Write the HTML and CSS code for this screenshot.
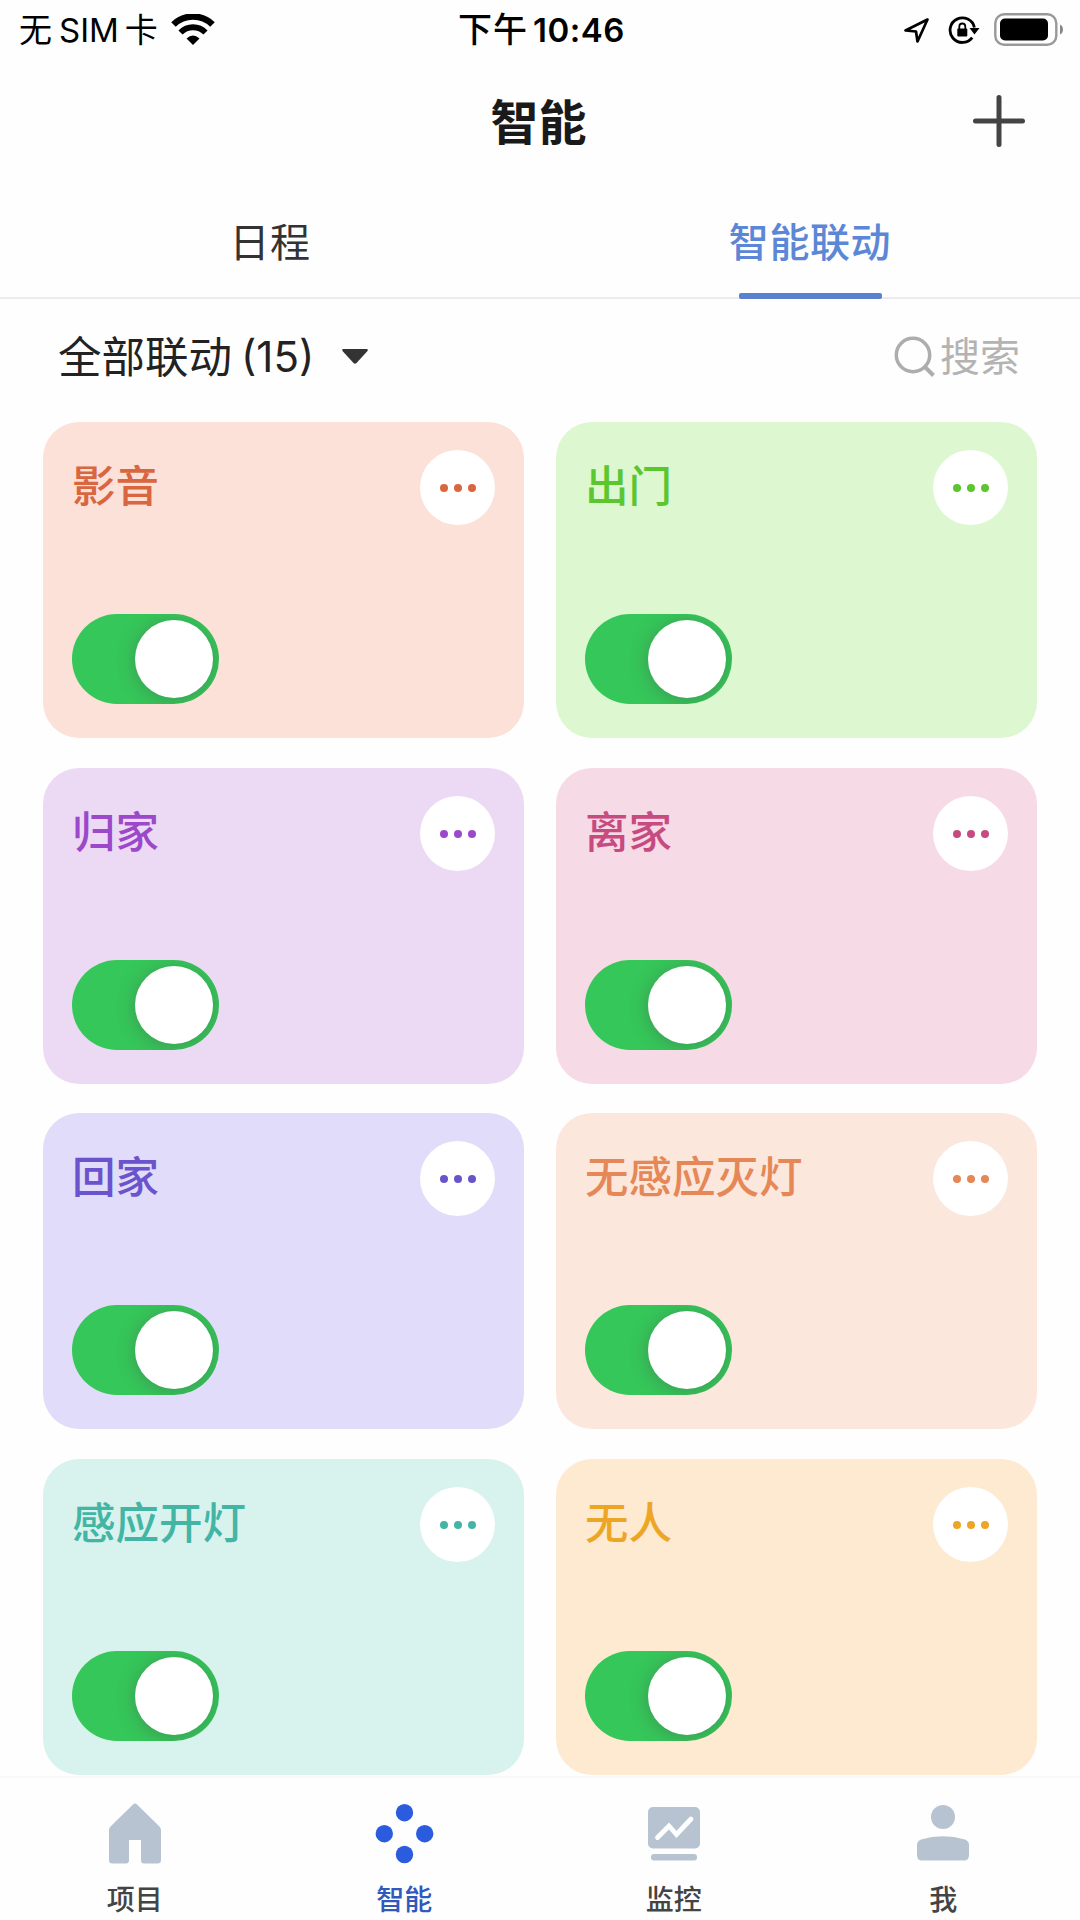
FILE: index.html
```
<!DOCTYPE html>
<html lang="zh-CN">

<head>
    <meta charset="UTF-8">
    <meta name="viewport" content="width=device-width, initial-scale=1.0">
    <title>智能</title>
    <link rel="stylesheet" href="styles.css">
</head>

<body>
    <div class="status">
        <div class="carrier">
            <span>无</span><span class="sim">SIM</span><span>卡</span>
            <svg class="wifi" width="44" height="32" viewBox="0 0 44 32">
                <path d="M2.500 10.500A28 28 0 0 1 41.500 10.500" fill="none" stroke="#000" stroke-width="6.500" />
                <path d="M9.500 18.500A17.500 17.500 0 0 1 34.500 18.500" fill="none" stroke="#000" stroke-width="5.800" />
                <path d="M22 31L15.500 24.500Q22 18.500 28.500 24.500Z" />
            </svg>
        </div>
        <div class="time"><span class="noon">下午</span><span class="clock">10:46</span></div>
        <div class="sys">
            <svg width="27" height="27" viewBox="0 0 27 27">
                <path d="M24.500 2.500L2.500 13.500L13 14.500L14.500 24.500Z" fill="none" stroke="#000" stroke-width="2.700" stroke-linejoin="round" />
            </svg>
            <svg class="lock" width="32" height="30" viewBox="0 0 32 30">
                <path d="M26.400 12.500A12.300 12.300 0 1 0 24.200 22.600" fill="none" stroke="#000" stroke-width="2.800" />
                <path d="M21.500 13H31.500L26.500 19.500Z" />
                <rect x="9.300" y="13.500" width="10" height="8" rx="1" />
                <path d="M11.300 14V11.500a3 3 0 0 1 6 0V14" fill="none" stroke="#000" stroke-width="1.800" />
            </svg>
            <svg class="battery" width="70" height="34" viewBox="0 0 70 34">
                <rect x="1.300" y="1.300" width="61" height="30.500" rx="9" fill="none" stroke="#999" stroke-width="2.400" />
                <rect x="6" y="5.500" width="48" height="22" rx="5" />
                <path d="M66 11.500Q69 13 69 16.500T66 21.500Z" fill="#888" />
            </svg>
        </div>
    </div>

    <div class="header">
        <div class="title">智能</div>
        <svg width="54" height="54" viewBox="0 0 54 54">
            <path d="M27 3.500V50.500M3.500 27H50.500" stroke="#444" stroke-width="5" stroke-linecap="round" />
        </svg>
    </div>

    <div class="tabs">
        <div class="tab">日程</div>
        <div class="tab active">智能联动</div>
    </div>

    <div class="filter">
        <div class="all">全部联动<span class="count">(15)</span>
            <svg width="28" height="17" viewBox="0 0 28 17">
                <path d="M2 1H26Q27.500 1.500 26.500 3L15.500 15Q14 16.500 12.500 15L1.500 3Q0.500 1.500 2 1Z" fill="#333" />
            </svg>
        </div>
        <div class="search">
            <svg width="42" height="42" viewBox="0 0 42 42">
                <circle cx="19" cy="19" r="16.700" fill="none" stroke="#adadad" stroke-width="3.500" />
                <path d="M31 31L39.500 39.500" stroke="#adadad" stroke-width="4" />
            </svg>搜索
        </div>
    </div>

    <div class="cards">
        <div class="card red">
            <div class="top">
                <div class="name">影音</div>
                <div class="more"><i></i><i></i><i></i></div>
            </div>
            <div class="switch"><div class="knob"></div></div>
        </div>
        <div class="card green">
            <div class="top">
                <div class="name">出门</div>
                <div class="more"><i></i><i></i><i></i></div>
            </div>
            <div class="switch"><div class="knob"></div></div>
        </div>
        <div class="card purple">
            <div class="top">
                <div class="name">归家</div>
                <div class="more"><i></i><i></i><i></i></div>
            </div>
            <div class="switch"><div class="knob"></div></div>
        </div>
        <div class="card pink">
            <div class="top">
                <div class="name">离家</div>
                <div class="more"><i></i><i></i><i></i></div>
            </div>
            <div class="switch"><div class="knob"></div></div>
        </div>
        <div class="card blue">
            <div class="top">
                <div class="name">回家</div>
                <div class="more"><i></i><i></i><i></i></div>
            </div>
            <div class="switch"><div class="knob"></div></div>
        </div>
        <div class="card orange">
            <div class="top">
                <div class="name">无感应灭灯</div>
                <div class="more"><i></i><i></i><i></i></div>
            </div>
            <div class="switch"><div class="knob"></div></div>
        </div>
        <div class="card teal">
            <div class="top">
                <div class="name">感应开灯</div>
                <div class="more"><i></i><i></i><i></i></div>
            </div>
            <div class="switch"><div class="knob"></div></div>
        </div>
        <div class="card yellow">
            <div class="top">
                <div class="name">无人</div>
                <div class="more"><i></i><i></i><i></i></div>
            </div>
            <div class="switch"><div class="knob"></div></div>
        </div>
    </div>

    <div class="nav">
        <div class="item">
            <svg width="60" height="64" viewBox="0 0 60 64">
                <path d="M28 2.500Q30 0.500 32 2.500L54 24Q56 26 56 28V58Q56 61.500 52.500 61.500H39Q36 61.500 36 58.500V38H24V58.500Q24 61.500 21 61.500H7.500Q4 61.500 4 58V28Q4 26 6 24Z" fill="#b7c3d0" />
            </svg>
            <span>项目</span>
        </div>
        <div class="item on">
            <svg width="60" height="64" viewBox="0 0 60 64">
                <g fill="#2b5ce0">
                    <circle cx="30.500" cy="10.700" r="8.700" />
                    <circle cx="10.300" cy="31.700" r="8.700" />
                    <circle cx="50.700" cy="31.700" r="8.700" />
                    <circle cx="30.500" cy="52.500" r="8.700" />
                </g>
            </svg>
            <span>智能</span>
        </div>
        <div class="item">
            <svg width="60" height="64" viewBox="0 0 60 64">
                <rect x="4" y="5" width="52" height="41.500" rx="5" fill="#b7c3d0" />
                <rect x="7" y="52" width="46" height="6.500" rx="3" fill="#b7c3d0" />
                <path d="M13.500 35.500L25 24L32.500 32.500L47 17" fill="none" stroke="#fff" stroke-width="4.800" stroke-linecap="round" />
            </svg>
            <span>监控</span>
        </div>
        <div class="item">
            <svg width="60" height="64" viewBox="0 0 60 64">
                <circle cx="30" cy="15" r="12" fill="#b7c3d0" />
                <path d="M4 43Q4 39 8 37.500Q30 31 52 37.500Q56 39 56 43V53Q56 58.500 51 58.500H9Q4 58.500 4 53Z" fill="#b7c3d0" />
            </svg>
            <span>我</span>
        </div>
    </div>
</body>

</html>
```
FILE: styles.css
```
* {
    box-sizing: border-box;
}

body {
    margin: 0;
    width: 1080px;
    height: 1920px;
    overflow: hidden;
    background-color: #fefefe;
    color: #222;
    font-family: Inter, "Noto Sans CJK SC", sans-serif;
    display: flex;
    flex-direction: column;
}

svg {
    display: block;
    flex: none;
}

.status {
    height: 58px;
    padding: 0 16px 0 19px;
    display: grid;
    grid-template-columns: 1fr auto 1fr;
    align-items: center;
    color: #000;
    font-size: 33px;
    line-height: 60px;
}

.carrier,
.time,
.sys {
    display: flex;
    align-items: center;
}

.sim {
    margin: 0 6px 0 7px;
}

.wifi {
    margin-left: 13px;
}

.time {
    font-weight: 600;
    letter-spacing: 0.5px;
}

.noon {
    font-size: 34px;
    font-weight: 500;
    letter-spacing: 1px;
}

.clock {
    margin-left: 5px;
}

.sys {
    justify-content: flex-end;
}

.lock {
    margin-left: 18px;
}

.battery {
    margin-left: 14px;
}

.header {
    height: 126px;
    padding: 0 54px;
    display: grid;
    grid-template-columns: 54px 1fr 54px;
    align-items: center;
}

.title {
    grid-column: 2;
    padding: 0 3px 5px 0;
    text-align: center;
    font-size: 48px;
    font-weight: bold;
    color: #1a1a1a;
}

.tabs {
    height: 115px;
    display: flex;
    border-bottom: 2px solid #ebebeb;
}

.tab {
    flex: 1;
    height: 115px;
    display: flex;
    flex-direction: column;
    align-items: center;
    font-size: 40px;
    line-height: 118px;
    letter-spacing: 0.6px;
    color: #333;
}

.active {
    color: #5b87d6;
    font-weight: 500;
}

.active::after {
    content: "";
    width: 143px;
    height: 6px;
    margin-top: -9px;
    border-radius: 2px;
    background-color: #5b80cd;
}

.filter {
    height: 123px;
    padding: 0 60px 8px 58px;
    display: flex;
    justify-content: space-between;
    align-items: center;
}

.all {
    display: flex;
    align-items: center;
    font-size: 43.500px;
    line-height: 60px;
    color: #222;
}

.count {
    margin: 0 27px 0 9px;
    font-size: 42px;
}

.search {
    display: flex;
    align-items: center;
    gap: 4px;
    font-size: 40px;
    line-height: 60px;
    color: #b3b3b3;
}

.cards {
    height: 1354px;
    padding: 0 43px;
    display: grid;
    grid-template-columns: 481px 481px;
    grid-auto-rows: 316px;
    gap: 29.500px 32px;
}

.card {
    padding: 28px 29px 34px 29px;
    border-radius: 36px;
    display: flex;
    flex-direction: column;
    justify-content: space-between;
}

.top {
    display: flex;
    justify-content: space-between;
}

.name {
    font-size: 43.500px;
    font-weight: 500;
    line-height: 73px;
}

.more {
    width: 75px;
    height: 75px;
    padding-top: 1px;
    border-radius: 50%;
    background-color: #fff;
    display: flex;
    justify-content: center;
    align-items: center;
    gap: 6px;
}

.more i {
    width: 8px;
    height: 8px;
    border-radius: 50%;
    background-color: currentColor;
}

.switch {
    width: 147px;
    height: 90px;
    padding: 6px;
    border-radius: 45px;
    background-color: #35c759;
    display: flex;
    justify-content: flex-end;
    overflow: hidden;
}

.knob {
    width: 78px;
    height: 78px;
    border-radius: 50%;
    background-color: #fff;
    box-shadow: 0 2px 18px rgba(70, 90, 80, 0.450);
}

.red {
    background-color: #fbe1d8;
    color: #d9663f;
}

.green {
    background-color: #ddf7d1;
    color: #5bc62f;
}

.purple {
    background-color: #ecdaf5;
    color: #9c48cb;
}

.pink {
    background-color: #f6dae5;
    color: #c74a80;
}

.blue {
    background-color: #e1dcf9;
    color: #6a53cc;
}

.orange {
    background-color: #fbe7dc;
    color: #e68757;
}

.teal {
    background-color: #d8f2ee;
    color: #43b5a5;
}

.yellow {
    background-color: #fdead0;
    color: #eda526;
}

.nav {
    height: 144px;
    padding: 24px 2px 0 0;
    border-top: 2px solid #f8f8f8;
    display: flex;
}

.item {
    flex: 1;
    display: flex;
    flex-direction: column;
    align-items: center;
    font-size: 28px;
    font-weight: 500;
    line-height: 40px;
    color: #444;
}

.item span {
    margin-top: 14px;
}

.on {
    color: #3159bd;
}
```
